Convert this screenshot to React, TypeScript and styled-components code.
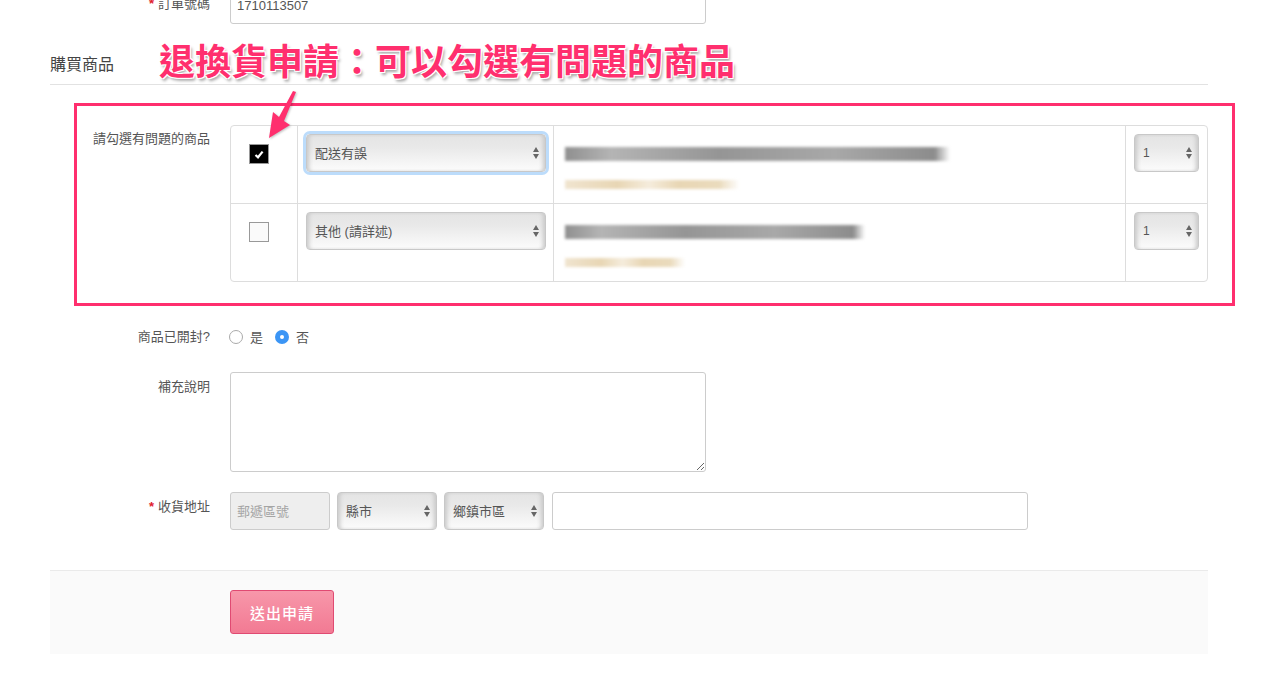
import React from "react";
import styled, { createGlobalStyle } from "styled-components";

const GlobalStyle = createGlobalStyle`
  html, body {
    margin: 0;
    padding: 0;
    height: 683px;
    overflow: hidden;
    background: #fff;
  }
  * { box-sizing: border-box; }
`;

const FONT = `"Liberation Sans", "Noto Sans CJK TC", sans-serif`;
const PINK = "#ff2f6e";

const Page = styled.div`
  position: relative;
  height: 683px;
  overflow: hidden;
  padding-left: 50px;
  font-family: ${FONT};
  font-size: 13px;
  color: #555;
`;
const Form = styled.form`
  width: 1158px;
  margin-top: -14px;
`;
const Row = styled.div<{ $mt?: number; $center?: boolean }>`
  display: flex;
  align-items: ${({ $center }) => ($center ? "center" : "flex-start")};
  margin-top: ${({ $mt }) => $mt ?? 0}px;
`;
const Label = styled.label<{ $pt?: number }>`
  width: 160px;
  flex: none;
  text-align: right;
  padding-top: ${({ $pt }) => $pt ?? 0}px;
  line-height: 18px;
  color: #555;
`;
const Required = styled.span`
  color: #e0202c;
  font-weight: bold;
  margin-right: 4px;
`;
const Field = styled.div`
  margin-left: 20px;
  display: flex;
  gap: 7px;
  align-items: flex-start;
`;
const TextInput = styled.input<{ $w: number; $ml?: number }>`
  width: ${({ $w }) => $w}px;
  height: 38px;
  margin-left: ${({ $ml }) => $ml ?? 0}px;
  border: 1px solid #ccc;
  border-radius: 3px;
  padding: 0 6px;
  font: 13px ${FONT};
  color: #555;
  background: ${({ disabled }) => (disabled ? "#eee" : "#fff")};
  &::placeholder { color: #a4a4a4; opacity: 1; }
`;
const Legend = styled.div`
  margin-top: 28px;
  height: 33px;
  border-bottom: 1px solid #e2e2e2;
  font-size: 16px;
  line-height: 25px;
  color: #444;
`;
const TableRow = styled.div`
  display: grid;
  grid-template-columns: 66px 256px 572px 1fr;
  height: 78px;
  &:first-child { height: 77px; }
  & + & { border-top: 1px solid #ddd; }
`;
const Table = styled.div`
  width: 978px;
  height: 157px;
  border: 1px solid #ddd;
  border-radius: 4px;
`;
const Cell = styled.div`
  position: relative;
  padding: 8px;
  & + & { border-left: 1px solid #ddd; }
`;
const CheckCell = styled(Cell)`
  padding: 18px 0 0 18px;
`;
const CheckBox = styled.span<{ $on?: boolean }>`
  width: 20px;
  height: 20px;
  display: flex;
  align-items: center;
  justify-content: center;
  border: 1px solid #999;
  background: ${({ $on }) => ($on ? "#000" : "#fafafa")};
  color: #fff;
`;
const SelectWrap = styled.div<{ $w: number; $focus?: boolean }>`
  position: relative;
  width: ${({ $w }) => $w}px;
  height: 38px;
  flex: none;
  border-radius: 4px;
  box-shadow: ${({ $focus }) => ($focus ? "0 0 0 3px #bcdcfb" : "none")};
`;
const Select = styled.select<{ $small?: boolean }>`
  appearance: none;
  display: block;
  width: 100%;
  height: 100%;
  border: 1px solid #c8c8c8;
  border-radius: 4px;
  padding: 0 20px 0 8px;
  font: ${({ $small }) => ($small ? 12 : 13)}px ${FONT};
  color: #555;
  outline: none;
  background: linear-gradient(#e4e4e4, #e9e9e9 35%, #fcfcfc 100%);
  box-shadow: inset 4px 0 4px -2px #c8c8c8, inset -4px 0 4px -2px #c8c8c8;
`;
const Arrows = styled.span`
  position: absolute;
  right: 7px;
  top: 50%;
  transform: translateY(-50%);
  display: flex;
  flex-direction: column;
  gap: 2px;
  pointer-events: none;
  &::before, &::after {
    content: "";
    width: 0;
    height: 0;
    border-left: 3.5px solid transparent;
    border-right: 3.5px solid transparent;
  }
  &::before { border-bottom: 5px solid #666; }
  &::after { border-top: 5px solid #666; }
`;
const BlurCell = styled(Cell)`
  padding: 0;
`;
const NameSmear = styled.div<{ $w: number }>`
  width: ${({ $w }) => $w}px;
  height: 14px;
  margin: 21px 0 0 11px;
  background: linear-gradient(90deg, #8f8f8f, #b4b4b4 12%, #959595 40%, #a8a8a8 70%, #8c8c8c 96%, transparent);
  filter: blur(1.5px);
`;
const PriceSmear = styled.div<{ $w: number }>`
  width: ${({ $w }) => $w}px;
  height: 9px;
  margin: 19px 0 0 11px;
  background: linear-gradient(90deg, #f0e4cf, #e8d6b4 30%, #f5ecdc 48%, #e8d6b4 65%, #eadbbd 88%, transparent);
  filter: blur(1.5px);
`;
const RadioGroup = styled.div`
  margin-left: 19px;
  display: flex;
  align-items: center;
  gap: 7px;
`;
const Radio = styled.span<{ $on?: boolean }>`
  width: 14px;
  height: 14px;
  border-radius: 50%;
  display: flex;
  align-items: center;
  justify-content: center;
  border: ${({ $on }) => ($on ? "none" : "1px solid #aaa")};
  background: ${({ $on }) => ($on ? "#3b95f5" : "#fff")};
  &::after {
    content: "";
    width: 4px;
    height: 4px;
    border-radius: 50%;
    background: ${({ $on }) => ($on ? "#fff" : "transparent")};
  }
`;
const RadioText = styled.span`
  font-size: 13px;
  margin-right: 5px;
`;
const TextArea = styled.textarea`
  display: block;
  width: 476px;
  height: 100px;
  border: 1px solid #ccc;
  border-radius: 3px;
`;
const Footer = styled.div`
  margin-top: 40px;
  height: 84px;
  border-top: 1px solid #eaeaea;
  background: #fafafa;
  padding: 19px 0 0 180px;
`;
const Submit = styled.button`
  width: 104px;
  height: 44px;
  border: 1px solid #e04a72;
  border-radius: 3px;
  background: linear-gradient(#f797aa, #f27a93);
  color: #fff;
  font: 500 15px ${FONT};
  letter-spacing: 1px;
`;
const Frame = styled.div`
  position: absolute;
  left: 74px;
  top: 103px;
  width: 1161px;
  height: 203px;
  border: 3px solid ${PINK};
  pointer-events: none;
`;
const Headline = styled.div`
  position: absolute;
  left: 159px;
  top: 34px;
  font: bold 36px/50px "Noto Sans CJK TC", sans-serif;
  white-space: nowrap;
  color: ${PINK};
  text-shadow: -1px -1px 0 #fff, 1px -1px 0 #fff, -1px 1px 0 #fff, 1px 1px 0 #fff,
    2px 3px 3px rgba(0, 0, 0, 0.35);
`;
const Pointer = styled.svg`
  position: absolute;
  left: 262px;
  top: 88px;
  filter: drop-shadow(1px 1px 1px rgba(0, 0, 0, 0.25));
`;

const Qty = () => (
  <SelectWrap $w={65}>
    <Select $small defaultValue="1">
      <option>1</option>
    </Select>
    <Arrows />
  </SelectWrap>
);

const Reason = ({ text, focus }: { text: string; focus?: boolean }) => (
  <SelectWrap $w={240} $focus={focus}>
    <Select defaultValue={text}>
      <option>{text}</option>
    </Select>
    <Arrows />
  </SelectWrap>
);

const AddressSelect = ({ text, w }: { text: string; w: number }) => (
  <SelectWrap $w={w}>
    <Select defaultValue={text}>
      <option>{text}</option>
    </Select>
    <Arrows />
  </SelectWrap>
);

export default function App() {
  return (
    <Page>
      <GlobalStyle />
      <Form>
        <Row>
          <Label $pt={9}>
            <Required>*</Required>訂單號碼
          </Label>
          <Field>
            <TextInput $w={476} defaultValue="1710113507" />
          </Field>
        </Row>
        <Legend>購買商品</Legend>
        <Row $mt={40}>
          <Label $pt={5}>請勾選有問題的商品</Label>
          <Field>
            <Table>
              <TableRow>
                <CheckCell>
                  <CheckBox $on>
                    <svg width="10" height="9" viewBox="0 0 10 9">
                      <path d="M1.5 5 L4 7.3 L8.6 1.6" fill="none" stroke="#fff" strokeWidth="2.2" />
                    </svg>
                  </CheckBox>
                </CheckCell>
                <Cell>
                  <Reason text="配送有誤" focus />
                </Cell>
                <BlurCell>
                  <NameSmear $w={385} />
                  <PriceSmear $w={175} />
                </BlurCell>
                <Cell>
                  <Qty />
                </Cell>
              </TableRow>
              <TableRow>
                <CheckCell>
                  <CheckBox />
                </CheckCell>
                <Cell>
                  <Reason text="其他 (請詳述)" />
                </Cell>
                <BlurCell>
                  <NameSmear $w={300} />
                  <PriceSmear $w={120} />
                </BlurCell>
                <Cell>
                  <Qty />
                </Cell>
              </TableRow>
            </Table>
          </Field>
        </Row>
        <Row $mt={45} $center>
          <Label>商品已開封?</Label>
          <RadioGroup>
            <Radio />
            <RadioText>是</RadioText>
            <Radio $on />
            <RadioText>否</RadioText>
          </RadioGroup>
        </Row>
        <Row $mt={26}>
          <Label $pt={6}>補充說明</Label>
          <Field>
            <TextArea />
          </Field>
        </Row>
        <Row $mt={20}>
          <Label $pt={6}>
            <Required>*</Required>收貨地址
          </Label>
          <Field>
            <TextInput $w={100} disabled placeholder="郵遞區號" />
            <AddressSelect text="縣市" w={100} />
            <AddressSelect text="鄉鎮市區" w={100} />
            <TextInput $w={476} $ml={1} />
          </Field>
        </Row>
        <Footer>
          <Submit type="button">送出申請</Submit>
        </Footer>
      </Form>
      <Frame />
      <Headline>退換貨申請：可以勾選有問題的商品</Headline>
      <Pointer width="40" height="56" viewBox="0 0 40 56">
        <path d="M34 4 L31 3 L17 29 L11 24 L7 50 L28 37 L22 33 Z" fill={PINK} />
      </Pointer>
    </Page>
  );
}
